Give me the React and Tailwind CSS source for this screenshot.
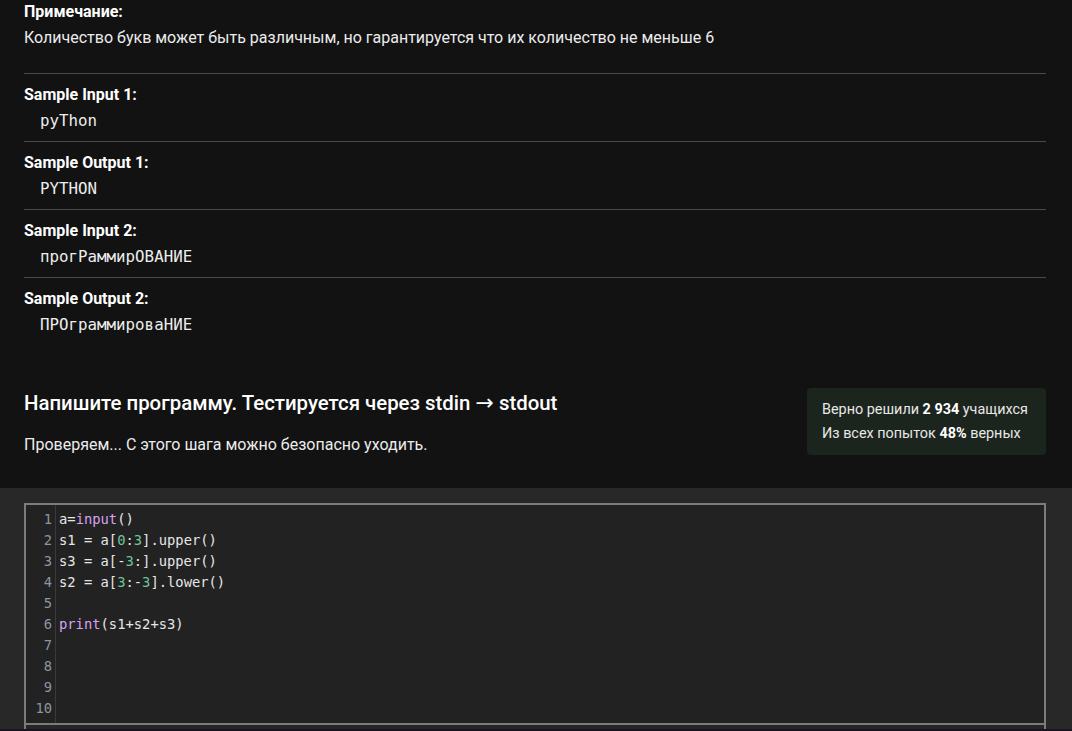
import React from 'react';

const samples = [
    { label: 'Sample Input 1:', value: 'pyThon' },
    { label: 'Sample Output 1:', value: 'PYTHON' },
    { label: 'Sample Input 2:', value: 'прогРаммирОВАНИЕ' },
    { label: 'Sample Output 2:', value: 'ПРОграммироваНИЕ' },
];

const N = ({ children }) => <span className="text-[#6fc59a]">{children}</span>;
const K = ({ children }) => <span className="text-[#d7a2f0]">{children}</span>;

const codeLines = [
    <>a=<K>input</K>()</>,
    <>s1 = a[<N>0</N>:<N>3</N>].upper()</>,
    <>s3 = a[-<N>3</N>:].upper()</>,
    <>s2 = a[<N>3</N>:-<N>3</N>].lower()</>,
    <></>,
    <><K>print</K>(s1+s2+s3)</>,
    <></>,
    <></>,
    <></>,
    <></>,
];

const sans = { fontFamily: 'Roboto, "Noto Sans", sans-serif' };
const mono = { fontFamily: '"DejaVu Sans Mono", "Liberation Mono", monospace' };

export default function App() {
    return (
        <div className="h-[731px] w-[1072px] overflow-hidden bg-[#121212] text-[#ececec] flex flex-col" style={sans}>
            <div className="pl-6 pr-[26px]">
                <div className="pt-[3px] text-[16px] font-bold leading-[18px] text-white">Примечание:</div>
                <div className="mt-[7px] text-[16px] leading-[20px]">
                    Количество букв может быть различным, но гарантируется что их количество не меньше 6
                </div>
                <div className="mt-[25px]">
                    {samples.map((s) => (
                        <div key={s.label} className="border-t border-[#4a4a4a] h-[68px]">
                            <div className="pt-[12px] text-[16px] font-bold leading-[18px] text-white">{s.label}</div>
                            <div className="pl-4 mt-[7px] text-[15.8px] leading-[20px] text-[#ededed]" style={mono}>
                                {s.value}
                            </div>
                        </div>
                    ))}
                </div>
                <div className="mt-[43px] flex justify-between items-start">
                    <div>
                        <div className="pt-[3px] text-[20.4px] font-medium leading-[24px] text-white">
                            Напишите программу. Тестируется через stdin <span style={{ fontFamily: '"DejaVu Sans", sans-serif' }} className="text-[22px] leading-[24px]">→</span> stdout
                        </div>
                        <div className="mt-[20px] text-[16px] leading-[20px] text-[#ececec]">
                            Проверяем... С этого шага можно безопасно уходить.
                        </div>
                    </div>
                    <div className="w-[239px] h-[67px] rounded bg-[#1c251d] pl-[15px] pt-[10px] text-[14.4px] leading-[24px] text-[#e8e8e8] whitespace-nowrap">
                        <div>Верно решили <b className="font-bold text-white">2 934</b> учащихся</div>
                        <div>Из всех попыток <b className="font-bold text-white">48%</b> верных</div>
                    </div>
                </div>
            </div>
            <div className="mt-[33px] flex-1 bg-[#282828] pt-[15px] pl-6 pr-[26px] flex flex-col">
                <div className="flex-1 border-x-2 border-t-2 border-[#7c7c7c] bg-[#222222] flex flex-col">
                    <div className="h-[218px] flex" style={mono}>
                        <div className="w-[30px] border-r border-[#3a3a3a] pt-1 text-right pr-[3px] text-[13.8px] leading-[21px] text-[#8d96a0]">
                            {codeLines.map((_, i) => (
                                <div key={i}>{i + 1}</div>
                            ))}
                        </div>
                        <div className="pt-1 pl-[3px] text-[13.8px] leading-[21px] text-[#e6e6e6] whitespace-pre">
                            {codeLines.map((l, i) => (
                                <div key={i} className="h-[21px]">{l}</div>
                            ))}
                        </div>
                    </div>
                    <div className="flex-1 border-t-2 border-[#7c7c7c] bg-[#262626]"></div>
                </div>
                <div className="h-[2px] -ml-6 -mr-[26px] bg-[#1a1520]"></div>
            </div>
        </div>
    );
}
